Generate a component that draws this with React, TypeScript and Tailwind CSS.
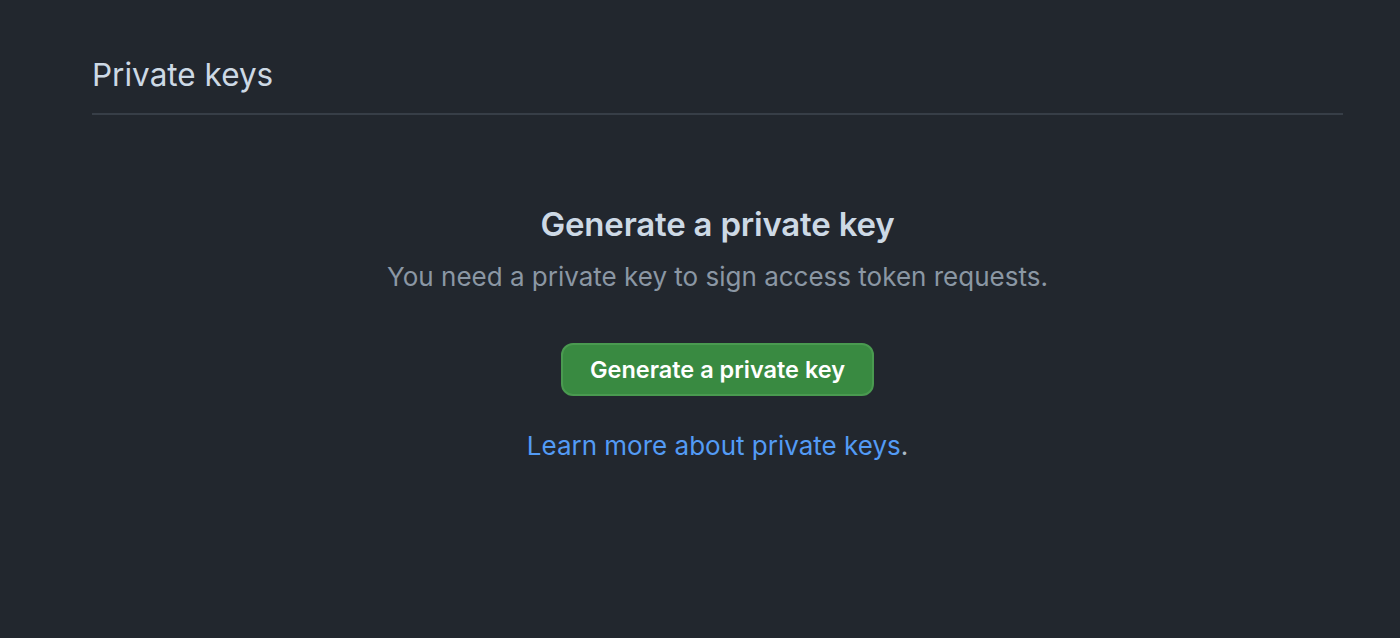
export default function App() {
  return (
    <div className="min-h-[638px] w-full bg-[#22272e] font-['Inter',sans-serif]">
      <div className="pl-[92px] pr-[57px] pt-[56px]">
        <div className="border-b-2 border-[#373e47] pb-[19px]">
          <h2 className="text-[31.5px] leading-[38px] font-normal text-[#cdd9e5]">Private keys</h2>
        </div>

        <div className="flex flex-col items-center pt-[89px] text-center">
          <h3 className="text-[33px] leading-[40px] font-semibold tracking-[-0.2px] text-[#cdd9e5]">
            Generate a private key
          </h3>
          <p className="mt-[17px] text-[26px] leading-[32px] text-[#8b97a4]">
            You need a private key to sign access token requests.
          </p>
          <button className="mt-[50px] h-[53px] rounded-[12px] border-2 border-[#4a9a50] bg-[#398a41] px-[27px] text-[23.5px] font-semibold text-white">
            Generate a private key
          </button>
          <p className="mt-[34px] text-[26px] leading-[32px] text-[#adbac7]">
            <a href="#" className="text-[#539bf5]">Learn more about private keys</a>.
          </p>
        </div>
      </div>
    </div>
  );
}
